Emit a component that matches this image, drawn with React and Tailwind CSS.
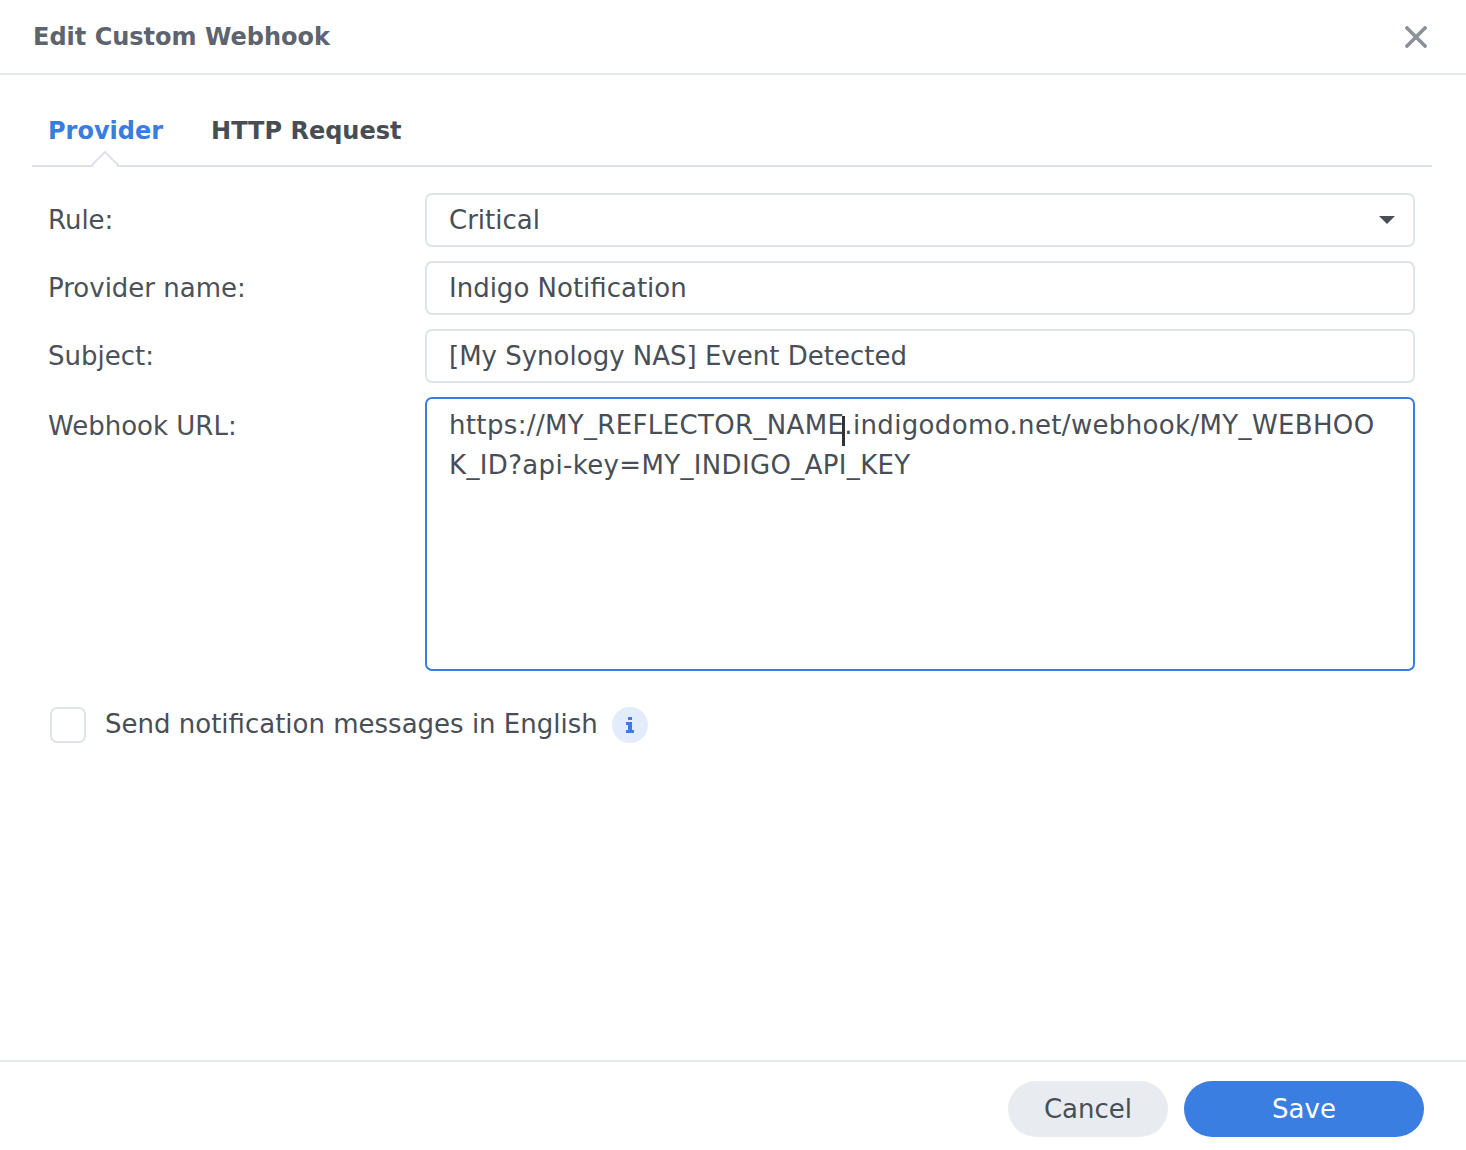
import { useState } from "react";

const FONT = { fontFamily: '"DejaVu Sans", Verdana, sans-serif' };

function Field({ label, children, top }) {
	return (
		<div className={`flex ${top ? "items-start" : "items-center"}`}>
			<label className={`w-[377px] shrink-0 text-[26px] text-[#4b5159] ${top ? "pt-[10px]" : ""}`}>{label}</label>
			<div className="flex-1">{children}</div>
		</div>
	);
}

export default function App() {
	const [english, setEnglish] = useState(false);

	return (
		<div className="flex h-[1150px] w-[1466px] flex-col bg-white" style={FONT}>
			<header className="flex h-[75px] items-center justify-between border-b-2 border-[#e3e7ee] pl-[33px] pr-[39px]">
				<h1 className="text-[24px] font-bold text-[#5d646d]">Edit Custom Webhook</h1>
				<button type="button" className="text-[#8c9199]">
					<svg width="22" height="22" viewBox="0 0 22 22">
						<path d="M2 2 L20 20 M20 2 L2 20" stroke="currentColor" strokeWidth="3.6" strokeLinecap="square" />
					</svg>
				</button>
			</header>

			<div className="flex-1 pl-[32px] pr-[34px]">
				<nav className="relative flex h-[92px] items-center gap-[48px] border-b-2 border-[#dde2ea] pl-[16px] pt-[22px]">
					<span className="text-[24px] font-bold text-[#3a7de0]">Provider</span>
					<span className="text-[24px] font-bold text-[#474d55]">HTTP Request</span>
					<svg className="absolute bottom-[-2px] left-[59px]" width="28" height="16" viewBox="0 0 28 16">
						<path d="M0 15 L14 1 L28 15" fill="white" stroke="#dde2ea" strokeWidth="2" />
						<rect x="3" y="14" width="22" height="2" fill="white" />
					</svg>
				</nav>

				<div className="flex flex-col gap-[14px] pl-[16px] pr-[17px] pt-[26px]">
					<Field label="Rule:">
						<div className="flex h-[54px] items-center justify-between rounded-[7px] border-2 border-[#dfe3ea] pl-[22px] pr-[18px] text-[26px] text-[#484e56]">
							<span>Critical</span>
							<svg width="16" height="9" viewBox="0 0 16 9">
								<path d="M0 0 H16 L8 8 Z" fill="#4a4f57" />
							</svg>
						</div>
					</Field>
					<Field label="Provider name:">
						<div className="flex h-[54px] items-center rounded-[7px] border-2 border-[#dfe3ea] pl-[22px] text-[26px] text-[#484e56]">
							Indigo Notification
						</div>
					</Field>
					<Field label="Subject:">
						<div className="flex h-[54px] items-center rounded-[7px] border-2 border-[#dfe3ea] pl-[22px] text-[26px] text-[#484e56]">
							[My Synology NAS] Event Detected
						</div>
					</Field>
					<Field label="Webhook URL:" top>
						<div className="h-[274px] rounded-[7px] border-2 border-[#3a7de0] pl-[22px] pr-[18px] pt-[6px] text-[26px] leading-[40px] tracking-[0.35px] text-[#484e56]">
							<div className="whitespace-nowrap">
								https://MY_REFLECTOR_NAME<span className="relative">
									<span className="absolute left-[-2px] top-[6px] h-[30px] w-[3px] bg-[#2f3338]" />
								</span>.indigodomo.net/webhook/MY_WEBHOO
							</div>
							<div>K_ID?api-key=MY_INDIGO_API_KEY</div>
						</div>
					</Field>
				</div>

				<div className="mt-[34px] flex items-center pl-[18px]">
					<button
						type="button"
						onClick={() => setEnglish(!english)}
						className="h-[36px] w-[36px] rounded-[7px] border-2 border-[#dfe3ea] bg-white"
					/>
					<span className="ml-[19px] text-[26px] text-[#484e56]">Send notification messages in English</span>
					<span className="ml-[14px] flex h-[36px] w-[36px] items-center justify-center rounded-full bg-[#e2ecfa]">
						<svg width="10" height="16" viewBox="0 0 10 16">
							<rect x="3" y="0" width="4" height="3" fill="#3a7de0" />
							<path d="M1 5 H7 V13 H9 V16 H1 V13 H3 V8 H1 Z" fill="#3a7de0" />
						</svg>
					</span>
				</div>
			</div>

			<footer className="flex h-[90px] shrink-0 items-start justify-end gap-[16px] border-t-2 border-[#e3e7ee] pr-[42px] pt-[19px]">
				<button type="button" className="h-[56px] w-[160px] rounded-full bg-[#e8ecf0] text-[26px] text-[#484e56]">
					Cancel
				</button>
				<button type="button" className="h-[56px] w-[240px] rounded-full bg-[#3a7ee2] text-[26px] text-white">
					Save
				</button>
			</footer>
		</div>
	);
}
